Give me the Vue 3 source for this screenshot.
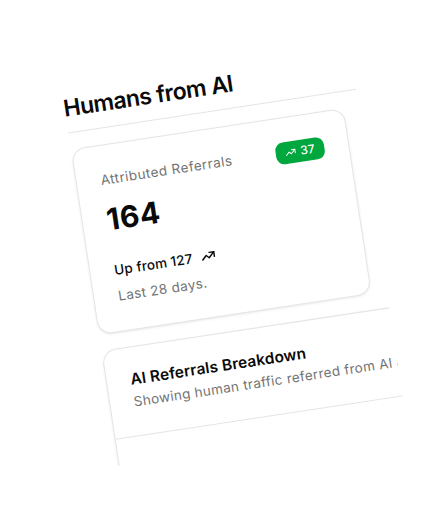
<script setup>
import { ref } from 'vue';

const referrals = ref(164);
const previous = ref(127);
</script>

<template>
  <main class="page">
    <section class="panel">
      <h1 class="title">Humans from AI</h1>

      <article class="card stat">
        <div class="stat-top">
          <span class="label">Attributed Referrals</span>
          <span class="badge">
            <svg class="badge-icon" viewBox="0 0 24 24">
              <path d="M3 17l6 -6l4 4l8 -8" />
              <path d="M14 7l7 0l0 7" />
            </svg>
            {{ referrals - previous }}
          </span>
        </div>
        <strong class="value">{{ referrals }}</strong>
        <p class="trend">
          <span>Up from {{ previous }}</span>
          <svg class="trend-icon" viewBox="0 0 24 24">
            <path d="M3 17l6 -6l4 4l8 -8" />
            <path d="M14 7l7 0l0 7" />
          </svg>
        </p>
        <p class="period">Last 28 days.</p>
      </article>

      <article class="card breakdown">
        <header class="breakdown-head">
          <h2>AI Referrals Breakdown</h2>
          <p>Showing human traffic referred from AI agents.</p>
        </header>
      </article>
    </section>
  </main>
</template>

<style>
body {
  background: #fff;
  overflow: hidden;
}
</style>

<style scoped>
.page {
  box-sizing: border-box;
  width: 435px;
  height: 509px;
  padding: 84.8px 0 0 61px;
  overflow: hidden;
  font-family: Inter, "Liberation Sans", sans-serif;
  color: #0a0a0a;
}

h1,
h2,
p {
  margin: 0;
}

/* the whole panel is tilted, and cut off at its right and bottom edges */
.panel {
  width: 291px;
  height: 385px;
  transform: rotate(-8.62deg);
  transform-origin: 0 0;
  clip-path: inset(0 0 0 -5px);
}

.title {
  box-sizing: border-box;
  height: 48.5px;
  padding-top: 7.5px;
  border-bottom: 1px solid #e5e5e5;
  font-size: 23px;
  line-height: 32px;
  font-weight: 600;
  letter-spacing: -0.56px;
  text-indent: -1px;
}

.card {
  box-sizing: border-box;
  margin-top: 16px;
  border: 1px solid #e5e5e5;
  border-radius: 14px;
  background: #fff;
  box-shadow: 0 1px 3px rgba(0, 0, 0, 0.07), 0 1px 2px -1px rgba(0, 0, 0, 0.07);
}

.stat {
  width: 275.5px;
  height: 188px;
  padding: 24px;
}

.stat-top {
  display: flex;
  justify-content: space-between;
  height: 32px;
}

.label {
  font-size: 13.5px;
  line-height: 20px;
  letter-spacing: 0.46px;
  color: #737373;
}

.badge {
  box-sizing: border-box;
  display: flex;
  align-items: center;
  justify-content: center;
  gap: 4px;
  width: 49px;
  height: 22px;
  border-radius: 8px;
  background: #00a63e;
  color: #fff;
  font-size: 12px;
  font-weight: 500;
}

svg {
  fill: none;
  stroke: currentColor;
  stroke-width: 2;
  stroke-linecap: round;
  stroke-linejoin: round;
}

.badge-icon {
  width: 12px;
  height: 12px;
}

.value {
  display: block;
  font-size: 30px;
  line-height: 36px;
  font-weight: 700;
  letter-spacing: 0.4px;
}

.trend {
  display: flex;
  align-items: center;
  gap: 8px;
  margin-top: 23px;
  font-size: 13.5px;
  line-height: 20px;
  font-weight: 500;
  letter-spacing: 0.14px;
}

.trend-icon {
  width: 16px;
  height: 16px;
  stroke-width: 2.2;
}

.period {
  margin-top: 6px;
  font-size: 13.5px;
  line-height: 20px;
  letter-spacing: 0.36px;
  color: #737373;
}

.breakdown {
  width: 560px;
  height: 300px;
}

.breakdown-head {
  box-sizing: border-box;
  height: 89px;
  padding: 22px 23.5px 0;
  border-bottom: 1px solid #e5e5e5;
}

.breakdown-head h2 {
  font-size: 15.5px;
  line-height: 20px;
  font-weight: 600;
  letter-spacing: 0.11px;
}

.breakdown-head p {
  margin-top: 2px;
  font-size: 13.5px;
  line-height: 20px;
  letter-spacing: 0.33px;
  color: #737373;
  white-space: nowrap;
}
</style>
